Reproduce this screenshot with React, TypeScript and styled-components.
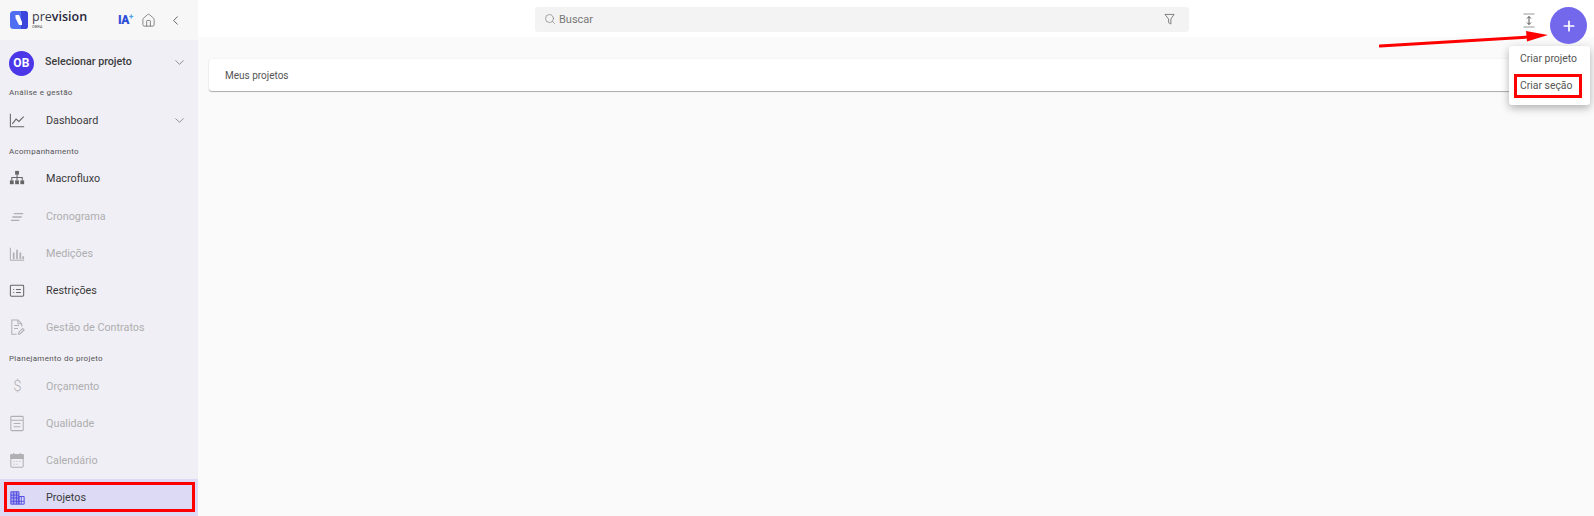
import React from "react";
import styled, { createGlobalStyle } from "styled-components";
import { ChevronDown, ChevronLeft, Search, Home, Plus } from "lucide-react";

const GlobalStyle = createGlobalStyle`
  html, body {
    margin: 0;
    padding: 0;
    height: 100%;
    overflow: hidden;
    background: #fafafa;
    font-family: Roboto, "Liberation Sans", sans-serif;
  }
`;

const icons: Record<string, React.ReactNode> = {
  dashboard: (
    <>
      <path d="M2.5 3v13.5H17" />
      <path d="M4.5 13.5l4-5 3 2.5 5-5" />
    </>
  ),
  macro: (
    <>
      <rect x="7.5" y="2" width="4" height="4" fill="currentColor" stroke="none" />
      <rect x="2" y="12" width="4" height="4" fill="currentColor" stroke="none" />
      <rect x="7.5" y="12" width="4" height="4" fill="currentColor" stroke="none" />
      <rect x="13" y="12" width="4" height="4" fill="currentColor" stroke="none" />
      <path d="M9.5 6v6M4 12V9h11v3" />
    </>
  ),
  crono: <path d="M6 7h10M4.5 10.5h10M3 14h9" strokeWidth="1.4" />,
  medicoes: (
    <>
      <path d="M2.5 4v13M2.5 17H17" />
      <path d="M6 16V9M9.5 16V6M13 16V9M16 16v-3" strokeWidth="1.8" />
    </>
  ),
  restricoes: (
    <>
      <rect x="2.5" y="4.5" width="14" height="11.5" rx="1" />
      <path d="M5.5 9h1M8.5 9h5M5.5 12h1M8.5 12h5" />
    </>
  ),
  contratos: (
    <>
      <path d="M14.5 9V6l-4-4H4v15h5" />
      <path d="M6.5 8h5M6.5 11h4M10.5 2v4h4M11 17l.5-2 4-4 1.5 1.5-4 4z" />
    </>
  ),
  qualidade: (
    <>
      <rect x="3" y="2.5" width="13" height="15" rx="1" />
      <path d="M3 6.5h13M6 10h7M6 13.5h7" />
    </>
  ),
  calendario: (
    <>
      <rect x="3" y="4" width="13" height="13" rx="1" />
      <path d="M3 4h13v4H3z" fill="currentColor" />
      <path d="M6 2v3M13 2v3M6 11h1M9 11h1M12 11h1M6 14h1M9 14h1" />
    </>
  ),
  projetos: (
    <>
      <path d="M3 4h8.5v13H3z" fill="currentColor" fillOpacity="0.35" strokeWidth="1" />
      <path d="M11.5 9H17v8h-5.5z" strokeWidth="1" />
      <path d="M3 7.5h8.5M3 10.5h8.5M3 14h14M6 4v13M9 4v13M14 9v8" strokeWidth="0.9" />
    </>
  ),
};

const NavIcon = ({ name }: { name: string }) => (
  <svg
    width="19"
    height="19"
    viewBox="0 0 20 20"
    fill="none"
    stroke="currentColor"
    strokeWidth="1.1"
  >
    {icons[name]}
  </svg>
);

const Item = ({
  icon,
  label,
  disabled,
  active,
  chevron,
}: {
  icon: React.ReactNode;
  label: string;
  disabled?: boolean;
  active?: boolean;
  chevron?: boolean;
}) => (
  <Row $active={active}>
    <IconSlot $disabled={disabled} $active={active}>
      {icon}
    </IconSlot>
    <RowLabel $disabled={disabled}>{label}</RowLabel>
    {chevron && (
      <ChevronSlot>
        <ChevronDown size={15} strokeWidth={1.3} />
      </ChevronSlot>
    )}
  </Row>
);

const App: React.FC = () => {
  return (
    <>
      <GlobalStyle />
      <Page>
        <Sidebar>
          <Brand>
            <LogoMark viewBox="0 0 18 18" width="18" height="18">
              <rect width="18" height="18" rx="3.5" fill="#4f6ef2" />
              <path d="M11 0h4a3 3 0 0 1 3 3v12a3 3 0 0 1-3 3h-4z" fill="#3b47dc" />
              <path d="M5.5 4H9l3 7v3H9L5.5 7z" fill="#fff" />
            </LogoMark>
            <BrandText>
              <BrandName>
                pre<b>vision</b>
              </BrandName>
              <BrandSub>OBRA</BrandSub>
            </BrandText>
            <IaTag>
              IA<sup>+</sup>
            </IaTag>
            <BrandAction>
              <Home size={15} strokeWidth={1.2} />
            </BrandAction>
            <BrandAction>
              <ChevronLeft size={15} strokeWidth={1.6} />
            </BrandAction>
          </Brand>
          <SideBody>
            <ProjectRow>
              <Avatar>OB</Avatar>
              <ProjectName>Selecionar projeto</ProjectName>
              <ChevronSlot>
                <ChevronDown size={15} strokeWidth={1.3} />
              </ChevronSlot>
            </ProjectRow>
            <GroupLabel>Análise e gestão</GroupLabel>
            <Item icon={<NavIcon name="dashboard" />} label="Dashboard" chevron />
            <GroupLabel>Acompanhamento</GroupLabel>
            <Item icon={<NavIcon name="macro" />} label="Macrofluxo" />
            <Item icon={<NavIcon name="crono" />} label="Cronograma" disabled />
            <Item icon={<NavIcon name="medicoes" />} label="Medições" disabled />
            <Item icon={<NavIcon name="restricoes" />} label="Restrições" />
            <Item icon={<NavIcon name="contratos" />} label="Gestão de Contratos" disabled />
            <GroupLabel>Planejamento do projeto</GroupLabel>
            <Item icon={<Dollar>$</Dollar>} label="Orçamento" disabled />
            <Item icon={<NavIcon name="qualidade" />} label="Qualidade" disabled />
            <Item icon={<NavIcon name="calendario" />} label="Calendário" disabled />
            <Item icon={<NavIcon name="projetos" />} label="Projetos" active />
          </SideBody>
        </Sidebar>
        <Main>
          <TopBar>
            <SearchBox>
              <Search size={12} strokeWidth={1.3} color="#777" />
              <SearchText>Buscar</SearchText>
              <FilterIcon viewBox="0 0 12 13" width="11" height="12">
                <path
                  d="M1 1.5h10L7.5 6.5V12L5 10.5V6.5z"
                  fill="none"
                  stroke="#777"
                  strokeWidth="1"
                />
              </FilterIcon>
            </SearchBox>
            <ExpandIcon viewBox="0 0 12 15" width="12" height="15">
              <path d="M0.5 1h11M0.5 14h11" stroke="#999" strokeWidth="1.2" />
              <path d="M6 3.5v8" stroke="#555" strokeWidth="1" />
              <path d="M4 5.5l2-2 2 2M4 9.5l2 2 2-2" stroke="#555" fill="none" strokeWidth="1" />
            </ExpandIcon>
            <Fab>
              <Plus size={16} strokeWidth={2.6} />
            </Fab>
          </TopBar>
          <Content>
            <SectionCard>Meus projetos</SectionCard>
          </Content>
        </Main>

        <Menu>
          <MenuItem>Criar projeto</MenuItem>
          <MenuItem>Criar seção</MenuItem>
        </Menu>

        {/* marcações vermelhas do print */}
        <RedBox $x={4} $y={482} $w={191} $h={30} />
        <RedBox $x={1514} $y={74} $w={68} $h={24} />
        <Arrow viewBox="0 0 170 20" width="170" height="20">
          <path d="M1 16L150 7" stroke="#f00" strokeWidth="3" strokeLinecap="round" />
          <path d="M147 1l22 4-21 6.5z" fill="#f00" />
        </Arrow>
      </Page>
    </>
  );
};

export default App;

const Page = styled.div`
  position: relative;
  display: flex;
  width: 1594px;
  height: 516px;
  overflow: hidden;
`;

const Sidebar = styled.aside`
  flex: 0 0 198px;
  display: flex;
  flex-direction: column;
  background: #f0eff6;
`;

const Brand = styled.div`
  flex: none;
  display: flex;
  align-items: center;
  height: 40px;
  padding: 0 10px;
  box-sizing: border-box;
  background: #f7f7f7;
`;

const LogoMark = styled.svg`
  flex: none;
  margin-right: 4px;
`;

const BrandText = styled.div`
  display: flex;
  flex-direction: column;
  width: 58px;
`;

const BrandName = styled.div`
  font-family: "Open Sans", sans-serif;
  font-size: 12.5px;
  line-height: 13px;
  color: #3a3a4a;

  b {
    font-weight: 600;
    color: #26263a;
  }
`;

const BrandSub = styled.div`
  font-size: 4px;
  line-height: 6px;
  color: #555;
  margin-top: 1px;
`;

const IaTag = styled.div`
  font-size: 12px;
  font-weight: 900;
  color: #2f4fd8;
  margin-left: 28px;
  width: 16px;
  letter-spacing: -0.5px;

  sup {
    font-size: 8px;
    line-height: 0;
    color: #4aa3e0;
  }
`;

const BrandAction = styled.div`
  display: flex;
  width: 16px;
  margin-left: 7px;
  color: #666;

  & + & {
    margin-left: 11px;
  }
`;

const SideBody = styled.div`
  display: flex;
  flex-direction: column;

  & > * {
    flex: none;
  }
`;

const ProjectRow = styled.div`
  display: flex;
  align-items: center;
  height: 40px;
  padding: 0 11px 0 9px;
`;

const Avatar = styled.div`
  width: 25px;
  height: 25px;
  border-radius: 50%;
  display: flex;
  align-items: center;
  justify-content: center;
  background: #4b37e8;
  color: #fff;
  font-size: 12px;
  font-weight: 700;
  letter-spacing: 0.3px;
  margin-top: 6px;
`;

const ProjectName = styled.div`
  margin-left: 11px;
  font-size: 10.7px;
  font-weight: 500;
  color: #3c3c3c;
  margin-top: 2px;
`;

const ChevronSlot = styled.div`
  display: flex;
  margin-left: auto;
  color: #777;

  ${ProjectRow} & {
    margin-top: 5px;
  }
`;

const GroupLabel = styled.div`
  height: 21.6px;
  box-sizing: border-box;
  padding: 7px 0 0 9px;
  line-height: 11px;
  font-size: 8px;
  letter-spacing: 0.3px;
  color: #555;
`;

const Row = styled.div<{ $active?: boolean }>`
  display: flex;
  align-items: center;
  height: 37.15px;
  padding: 0 11px 0 8px;
  box-sizing: border-box;
  background: ${(p) => (p.$active ? "#dcdaf4" : "transparent")};
`;

const IconSlot = styled.div<{ $disabled?: boolean; $active?: boolean }>`
  display: flex;
  justify-content: center;
  width: 19px;
  color: ${(p) => (p.$active ? "#4b44e0" : p.$disabled ? "#b0b0b4" : "#666")};
`;

const Dollar = styled.span`
  font-size: 15px;
  line-height: 18px;
  font-weight: 300;
`;

const RowLabel = styled.div<{ $disabled?: boolean }>`
  margin-left: 19px;
  font-size: 10.8px;
  color: ${(p) => (p.$disabled ? "#aeaeae" : "#3a3a3a")};
`;

const Main = styled.main`
  flex: 1;
  display: flex;
  flex-direction: column;
`;

const TopBar = styled.div`
  position: relative;
  display: flex;
  align-items: center;
  height: 37px;
  padding-left: 337px;
  background: #fff;
`;

const SearchBox = styled.div`
  display: flex;
  align-items: center;
  width: 654px;
  height: 25px;
  margin-top: 1px;
  padding: 0 14px 0 9px;
  box-sizing: border-box;
  border-radius: 3px;
  background: #f3f3f3;
`;

const SearchText = styled.span`
  margin-left: 3px;
  font-size: 11px;
  color: #777;
`;

const FilterIcon = styled.svg`
  margin-left: auto;
`;

const ExpandIcon = styled.svg`
  position: absolute;
  left: 1325px;
  top: 13px;
`;

const Fab = styled.div`
  position: absolute;
  left: 1352px;
  top: 7px;
  width: 37px;
  height: 37px;
  border-radius: 50%;
  display: flex;
  align-items: center;
  justify-content: center;
  background: #7367ec;
  color: #fff;
  z-index: 2;
`;

const Content = styled.div`
  flex: 1;
  padding: 22px 7px 0 11px;
  background: #fafafa;
`;

const SectionCard = styled.div`
  height: 32px;
  padding-left: 16px;
  display: flex;
  align-items: center;
  font-size: 10px;
  color: #555;
  background: #fff;
  border-radius: 3px;
  box-shadow: 0 1px 1px rgba(0, 0, 0, 0.3), 0 0 2px rgba(0, 0, 0, 0.08);
`;

const Menu = styled.div`
  position: absolute;
  left: 1509px;
  top: 46px;
  width: 81px;
  height: 59px;
  padding-top: 1px;
  box-sizing: border-box;
  display: flex;
  flex-direction: column;
  background: #fff;
  border-radius: 3px;
  box-shadow: 0 3px 8px rgba(0, 0, 0, 0.3);
`;

const MenuItem = styled.div`
  height: 27px;
  line-height: 24px;
  padding-left: 11px;
  font-size: 10.4px;
  color: #555;
`;

const RedBox = styled.div<{ $x: number; $y: number; $w: number; $h: number }>`
  position: absolute;
  left: ${(p) => p.$x}px;
  top: ${(p) => p.$y}px;
  width: ${(p) => p.$w}px;
  height: ${(p) => p.$h}px;
  box-sizing: border-box;
  border: 3px solid #f00;
`;

const Arrow = styled.svg`
  position: absolute;
  left: 1379px;
  top: 30px;
`;
